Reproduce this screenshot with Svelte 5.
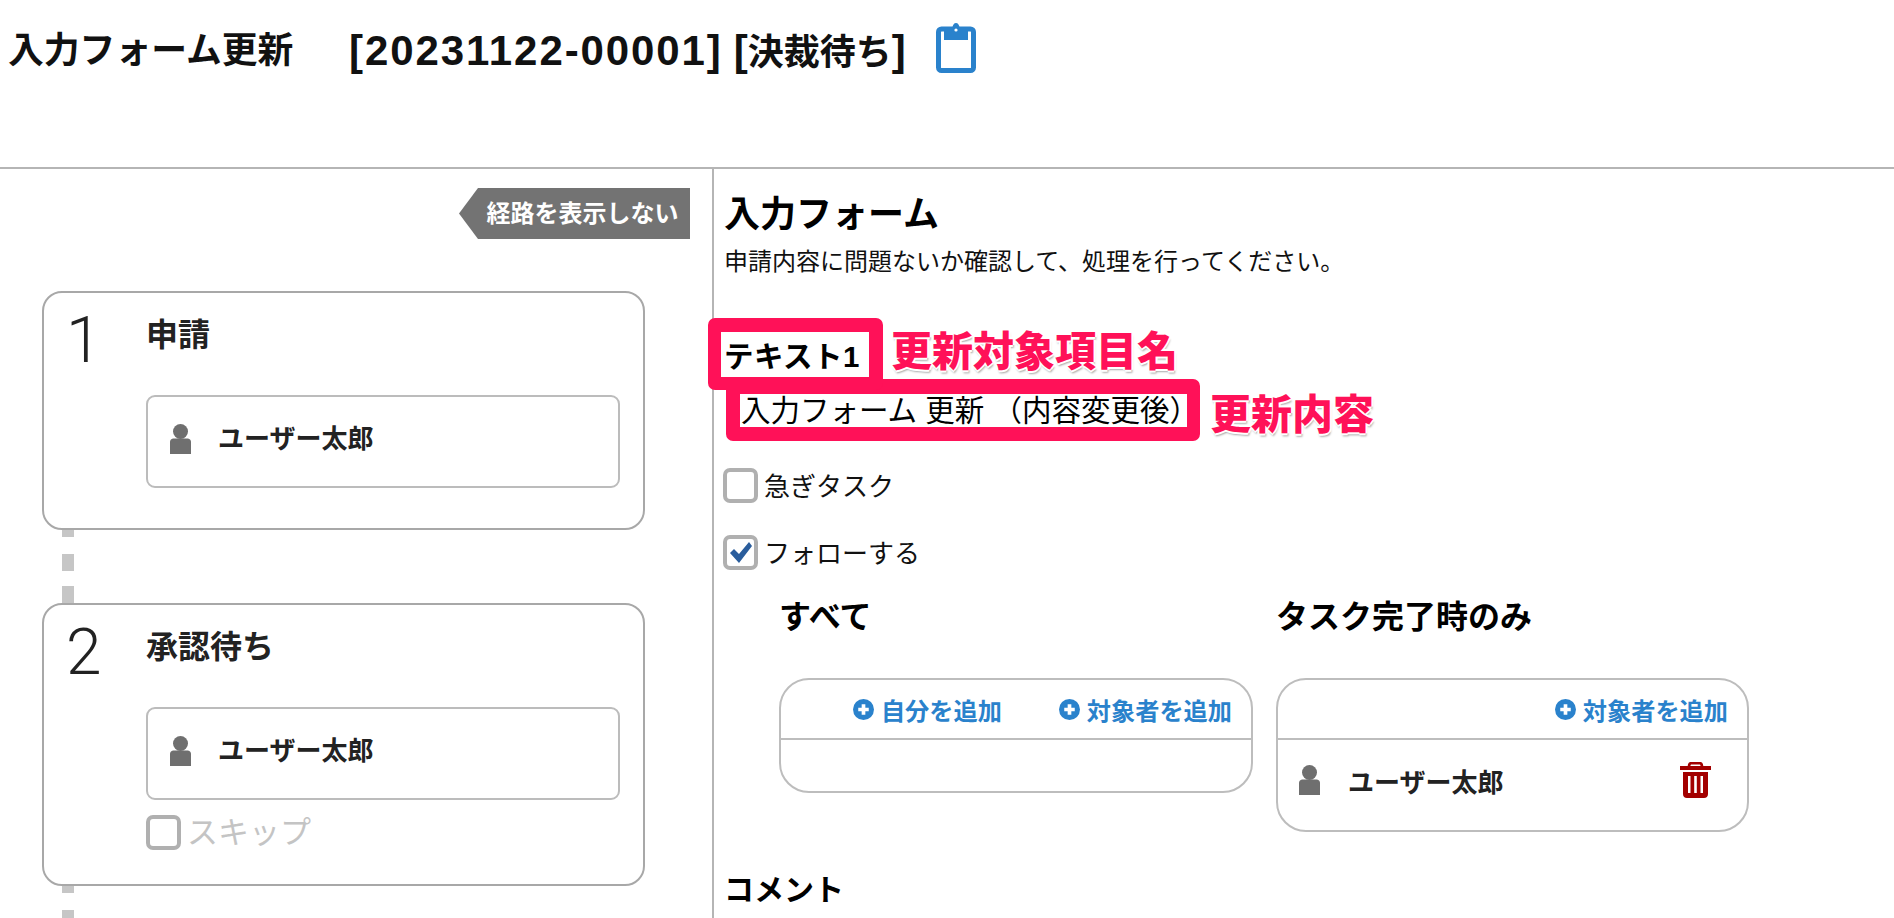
<script lang="ts">
  const steps = [
    { no: 1, title: "申請", user: "ユーザー太郎", skip: false },
    { no: 2, title: "承認待ち", user: "ユーザー太郎", skip: true },
  ];
</script>

{#snippet person()}
  <svg class="person" viewBox="0 0 21 30" aria-hidden="true">
    <ellipse cx="10.5" cy="7.5" rx="7.5" ry="7.5" />
    <path d="M0 30V18c0-2 1-3 3-3.500h15c2 .5 3 1.500 3 3.500v12z" />
  </svg>
{/snippet}

{#snippet plus()}
  <svg class="plus" viewBox="0 0 20 20" aria-hidden="true">
    <circle cx="10" cy="10" r="10" />
    <path d="M10 5v10M5 10h10" />
  </svg>
{/snippet}

<div class="page">
  <header class="header">
    <h1>入力フォーム更新</h1>
    <div class="ticket">
      <span class="num">[20231122-00001]</span>
      <span class="state"><span class="br">[</span>決裁待ち<span class="br">]</span></span>
    </div>
    <svg class="clip" viewBox="0 0 40 50" aria-hidden="true">
      <rect x="2.500" y="6" width="35" height="41.500" rx="3" class="clip-body" />
      <path class="clip-top" d="M8 4h8.500C17 2 18 0 20 0s3 2 3.500 4H32v13H8z" />
      <circle class="clip-dot" cx="20" cy="7" r="1.600" />
    </svg>
  </header>

  <main class="main">
    <section class="route">
      <button type="button" class="toggle">経路を表示しない</button>
      {#each steps as step (step.no)}
        <article class="step">
          <div class="step-no">{step.no}</div>
          <div class="step-body">
            <h2>{step.title}</h2>
            <div class="assignee">
              {@render person()}
              <span>{step.user}</span>
            </div>
            {#if step.skip}
              <div class="skip">
                <span class="box"></span>
                <span>スキップ</span>
              </div>
            {/if}
          </div>
        </article>
        <div class="connector"></div>
      {/each}
    </section>

    <section class="form">
      <h2 class="form-title">入力フォーム</h2>
      <p class="lead">申請内容に問題ないか確認して、処理を行ってください。</p>

      <div class="field-name">
        <span class="frame name-frame"><b>テキスト1</b></span>
        <span class="note">更新対象項目名</span>
      </div>
      <div class="field-value">
        <span class="frame value-frame">入力フォーム 更新 （内容変更後）</span>
        <span class="note">更新内容</span>
      </div>

      <div class="checks">
        <label class="check"><span class="box"></span><span class="check-text">急ぎタスク</span></label>
        <label class="check">
          <span class="box">
            <svg viewBox="0 0 27 27" aria-hidden="true"><path d="M3 14l4-4 5 5L22 3l3 4-13 17z" /></svg>
          </span><span class="check-text">フォローする</span>
        </label>
      </div>

      <div class="follow">
        <div>
          <h3>すべて</h3>
          <div class="panel">
            <div class="panel-head">
              <span class="link">{@render plus()}自分を追加</span>
              <span class="link">{@render plus()}対象者を追加</span>
            </div>
            <div class="panel-body short"></div>
          </div>
        </div>
        <div>
          <h3>タスク完了時のみ</h3>
          <div class="panel">
            <div class="panel-head">
              <span class="link">{@render plus()}対象者を追加</span>
            </div>
            <div class="panel-body">
              {@render person()}
              <span class="user">ユーザー太郎</span>
              <svg class="trash" viewBox="0 0 31 36" aria-hidden="true">
                <path fill-rule="evenodd" d="M11 0h9c2 0 3 1 3.300 4H31v4H0V4h7.700C8 1 9 0 11 0zm.5 2.500c-.8 0-1 .6-1.100 1.500h10.200c-.1-.9-.3-1.500-1.100-1.500zM3 10h25v22c0 2.500-1.500 4-4 4H7c-2.500 0-4-1.500-4-4zm5 4v17h2.500V14zm6.200 0v17h2.600V14zm6.300 0v17H23V14z" />
              </svg>
            </div>
          </div>
        </div>
      </div>

      <h3 class="comment">コメント</h3>
    </section>
  </main>
</div>

<style>
  :global(body) {
    margin: 0;
    background: #fff;
  }

  .page {
    height: 100vh;
    overflow: hidden;
    color: #111;
    font-family: "Liberation Sans", "Noto Sans CJK JP", sans-serif;
  }

  h1, h2, h3, p {
    margin: 0;
  }

  .header {
    display: flex;
    align-items: flex-start;
    height: 169px;
    box-sizing: border-box;
    padding: 23px 0 0 8px;
    border-bottom: 2px solid #b5b5b5;
  }

  .header h1 {
    width: 341px;
    margin-top: 8px;
    font-size: 35.800px;
    line-height: 40px;
    font-weight: 700;
    white-space: nowrap;
  }

  .ticket {
    display: flex;
    gap: 11px;
    width: 587px;
    margin-top: 6px;
    font-weight: 700;
    line-height: 44px;
    white-space: nowrap;
  }

  .num {
    font-size: 42px;
    letter-spacing: 1.900px;
  }

  .state {
    font-size: 36px;
  }

  .br {
    font-size: 42px;
  }

  .clip {
    width: 40px;
    height: 50px;
  }

  .clip-body {
    fill: #fff;
    stroke: #2a82cc;
    stroke-width: 5;
  }

  .clip-top {
    fill: #2a82cc;
  }

  .clip-dot {
    fill: #fff;
  }

  .main {
    display: flex;
    height: 749px;
  }

  .route {
    display: flex;
    flex-direction: column;
    align-items: flex-start;
    width: 714px;
    flex: none;
    border-right: 2px solid #b5b5b5;
    padding: 19px 0 0 42px;
    box-sizing: border-box;
  }

  .toggle {
    align-self: flex-end;
    width: 231px;
    height: 51px;
    margin: 0 22px 52px 0;
    padding: 0 0 0 16px;
    border: none;
    background: #737373;
    color: #fff;
    font: 700 24px/51px "Liberation Sans", "Noto Sans CJK JP", sans-serif;
    white-space: nowrap;
    clip-path: polygon(19px 0, 100% 0, 100% 100%, 19px 100%, 0 50%);
  }

  .step {
    display: flex;
    flex: none;
    width: 603px;
    box-sizing: border-box;
    border: 2px solid #a8a8a8;
    border-radius: 20px;
    background: #fff;
  }

  .step-no {
    width: 102px;
    flex: none;
    padding: 13px 0 0 22px;
    box-sizing: border-box;
    font-family: Roboto, sans-serif;
    font-weight: 300;
    font-size: 64px;
    line-height: 70px;
    color: #222;
  }

  .step-body {
    flex: 1;
    padding: 22px 23px 40px 0;
    min-width: 0;
  }

  .step-body h2 {
    height: 80px;
    font-size: 32px;
    line-height: 40px;
    font-weight: 700;
    color: #222;
  }

  .assignee {
    display: flex;
    height: 93px;
    box-sizing: border-box;
    padding: 27px 0 0 22px;
    border: 2px solid #bcbcbc;
    border-radius: 9px;
  }

  .assignee span {
    margin-left: 27px;
    font-size: 26px;
    line-height: 30px;
    font-weight: 700;
    color: #222;
  }

  .person {
    flex: none;
    width: 21px;
    height: 30px;
    fill: #6f6f6f;
  }

  .skip {
    display: flex;
    gap: 6px;
    align-items: center;
    margin: 15px 0 -6px;
    font-size: 31px;
    line-height: 35px;
    color: #c4c4c4;
  }

  .box {
    display: block;
    flex: none;
    width: 35px;
    height: 35px;
    box-sizing: border-box;
    border: 4px solid #b0b0b0;
    border-radius: 7px;
    background: #fff;
  }

  .connector {
    flex: none;
    width: 12px;
    height: 73px;
    margin-left: 20px;
    background: repeating-linear-gradient(to bottom, #c6c6c6 0 7px, transparent 7px 24px, #c6c6c6 24px 41px, transparent 41px 56px, #c6c6c6 56px 73px);
  }

  .form {
    flex: 1;
    padding: 24px 0 0 10px;
    min-width: 0;
  }

  .form-title {
    font-size: 36px;
    line-height: 44px;
    font-weight: 700;
    color: #000;
  }

  .lead {
    margin-top: 10px;
    font-size: 24px;
    line-height: 30px;
    color: #111;
    white-space: nowrap;
  }

  .field-name,
  .field-value {
    display: flex;
    align-items: center;
  }

  .field-name {
    position: relative;
    z-index: 1;
    margin: 41px 0 0 -16px;
  }

  .field-value {
    margin: -11px 0 0 2px;
  }

  .frame {
    box-sizing: border-box;
    flex: none;
    border-style: solid;
    border-color: #ff1158;
    border-radius: 7px;
    background: #fff;
    color: #000;
    white-space: pre;
  }

  .name-frame {
    width: 175px;
    height: 72px;
    border-width: 14px 14px 13px 13px;
    padding: 2px 0 0 3px;
    font-size: 29.500px;
    line-height: 45px;
    letter-spacing: .5px;
  }

  .value-frame {
    width: 474px;
    height: 62px;
    border-width: 15px 13px 14px 14px;
    padding-left: 1px;
    font-size: 29.500px;
    line-height: 33px;
    overflow: hidden;
  }

  .note {
    color: #ff1158;
    font-size: 41px;
    line-height: 50px;
    font-weight: 900;
    white-space: nowrap;
    text-shadow:
      2px 0 0 #fff,
      -2px 0 0 #fff,
      0 -2px 0 #fff,
      0 2px 0 #fff,
      1px 3px 2px #aaa;
  }

  .field-name .note {
    margin: -4px 0 0 8px;
  }

  .field-value .note {
    margin: 9px 0 0 10px;
  }

  .checks {
    display: flex;
    flex-direction: column;
    gap: 32px;
    margin: 27px 0 0 -1px;
  }

  .check {
    display: flex;
    align-items: center;
    gap: 6px;
    height: 35px;
    font-size: 26px;
    color: #111;
  }

  .check-text {
    margin-top: -3px;
  }

  .check svg {
    display: block;
    width: 27px;
    height: 27px;
    fill: #2a5d9c;
  }

  .follow {
    display: grid;
    grid-template-columns: 474px 473px;
    gap: 23px;
    margin: 27px 0 0 55px;
  }

  .follow > div {
    align-self: start;
  }

  .follow h3 {
    font-size: 32px;
    line-height: 40px;
    font-weight: 700;
    color: #000;
    white-space: nowrap;
  }

  .panel {
    margin-top: 41px;
    border: 2px solid #bdbdbd;
    border-radius: 30px;
  }

  .panel-head {
    display: flex;
    justify-content: flex-end;
    gap: 57px;
    height: 60px;
    padding-right: 19px;
    box-sizing: border-box;
    border-bottom: 2px solid #bdbdbd;
  }

  .link {
    display: flex;
    align-items: center;
    gap: 7px;
    color: #2a82cc;
    font-size: 24.200px;
    font-weight: 700;
    white-space: nowrap;
  }

  .plus {
    width: 21px;
    height: 21px;
  }

  .plus circle {
    fill: #2a82cc;
  }

  .plus path {
    stroke: #fff;
    stroke-width: 3.500;
  }

  .panel-body {
    display: flex;
    align-items: center;
    height: 90px;
    padding: 0 36px 10px 21px;
    box-sizing: border-box;
  }

  .panel-body.short {
    height: 51px;
    padding: 0;
  }

  .user {
    margin-left: 28px;
    font-size: 26px;
    font-weight: 700;
    color: #222;
  }

  .trash {
    width: 31px;
    height: 36px;
    margin-left: auto;
    fill: #a30000;
  }

  .comment {
    margin-top: 38px;
    font-size: 30px;
    line-height: 40px;
    font-weight: 700;
    color: #000;
  }
</style>
